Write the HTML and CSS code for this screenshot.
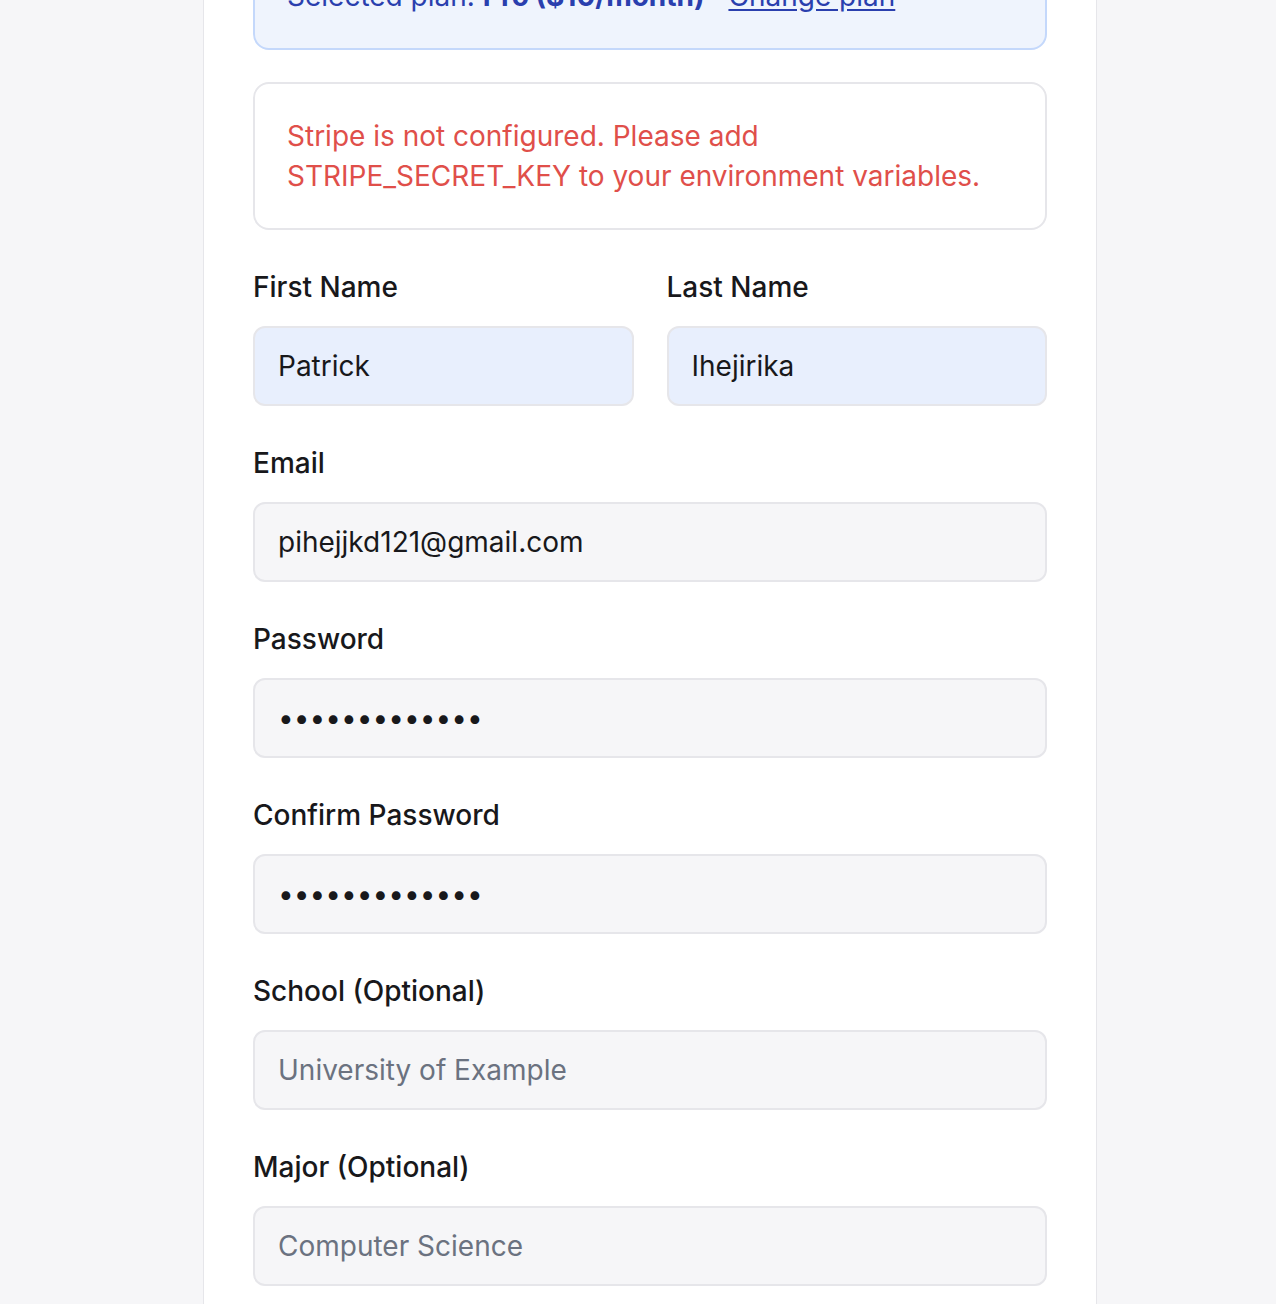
FILE: index.html
```html
<!DOCTYPE html>
<html lang="en">
<head>
<meta charset="utf-8">
<title>Sign up</title>
<link rel="stylesheet" href="styles.css">
</head>
<body>
<main class="page">
  <section class="card">
    <div class="plan">
      Selected plan: <strong>Pro ($10/month)</strong> · <a href="#" class="plan-link">Change plan</a>
    </div>
    <div class="error">Stripe is not configured. Please add STRIPE_SECRET_KEY to your environment variables.</div>
    <form class="form">
      <div class="row">
        <div class="field">
          <label class="label" for="first">First Name</label>
          <input class="input input-filled" id="first" type="text" value="Patrick">
        </div>
        <div class="field">
          <label class="label" for="last">Last Name</label>
          <input class="input input-filled" id="last" type="text" value="Ihejirika">
        </div>
      </div>
      <div class="field">
        <label class="label" for="email">Email</label>
        <input class="input" id="email" type="email" value="pihejjkd121@gmail.com">
      </div>
      <div class="field">
        <label class="label" for="pw">Password</label>
        <input class="input" id="pw" type="password" value="abcdefghijklm">
      </div>
      <div class="field">
        <label class="label" for="pw2">Confirm Password</label>
        <input class="input" id="pw2" type="password" value="abcdefghijklm">
      </div>
      <div class="field">
        <label class="label" for="school">School (Optional)</label>
        <input class="input" id="school" type="text" placeholder="University of Example">
      </div>
      <div class="field">
        <label class="label" for="major">Major (Optional)</label>
        <input class="input" id="major" type="text" placeholder="Computer Science">
      </div>
    </form>
  </section>
</main>
</body>
</html>
```
FILE: styles.css
```css
html, body {
  margin: 0;
  padding: 0;
}
body {
  background: #f6f6f8;
  font-family: "Inter", "Noto Sans", sans-serif;
  color: #18181b;
  font-size: 28px;
  line-height: 40px;
  overflow: hidden;
  height: 1304px;
}
.page {
  display: flex;
  padding-left: 203px;
}
.card {
  width: 794px;
  margin-top: -108px;
  background: #ffffff;
  border: 1px solid #e6e6ea;
  border-bottom: none;
  padding: 49px 49px 120px 49px;
  display: flex;
  flex-direction: column;
}
.plan {
  background: #eff4fd;
  border: 2px solid #c4d8fb;
  border-radius: 16px;
  padding: 32px;
  color: #2a3fae;
  font-size: 28px;
  line-height: 40px;
}
.plan strong {
  font-weight: 700;
}
.plan-link {
  color: #2a3fae;
  text-decoration: underline;
  text-underline-offset: 3px;
}
.error {
  margin-top: 32px;
  border: 2px solid #e6e6ea;
  border-radius: 16px;
  padding: 32px;
  color: #e04f4a;
  font-size: 28px;
  line-height: 40px;
}
.form {
  margin-top: 37px;
  display: flex;
  flex-direction: column;
  gap: 37px;
}
.row {
  display: grid;
  grid-template-columns: 1fr 1fr;
  gap: 33px;
}
.field {
  display: flex;
  flex-direction: column;
  gap: 19px;
}
.label {
  font-weight: 500;
  font-size: 28px;
  line-height: 40px;
  color: #18181b;
}
.input {
  box-sizing: border-box;
  height: 80px;
  width: 100%;
  border: 2px solid #e6e6ea;
  border-radius: 12px;
  background: #f6f6f8;
  padding: 0 23px;
  font-family: "Inter", "Noto Sans", sans-serif;
  font-size: 28px;
  color: #18181b;
  outline: none;
  margin: 0;
}
.input-filled {
  background: #e8effd;
}
.input::placeholder {
  color: #6b7280;
}
```
